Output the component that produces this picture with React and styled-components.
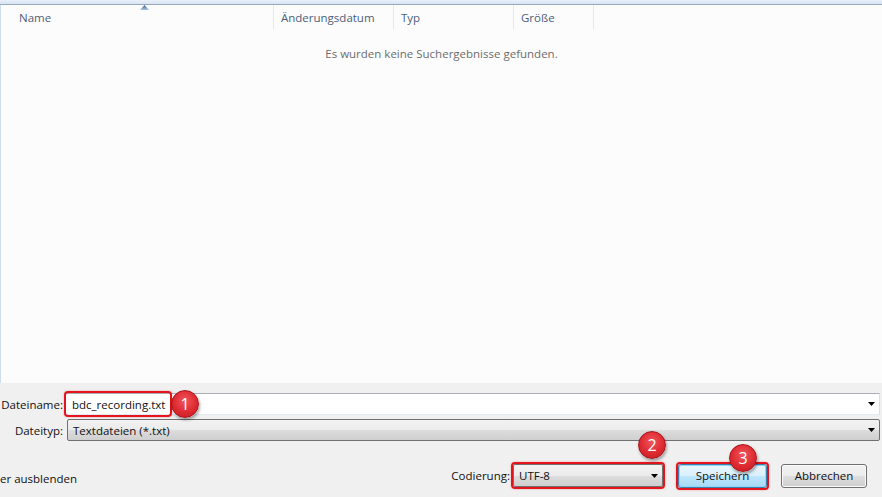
import React from 'react'
import styled, { createGlobalStyle } from 'styled-components'

const GlobalStyle = createGlobalStyle`
  html, body {
    margin: 0;
    padding: 0;
    background: #f0f0f0;
  }
  body {
    font-family: 'Open Sans', 'Noto Sans', sans-serif;
    font-size: 11.5px;
    color: #111;
  }
`

const Window = styled.div`
  width: 882px;
  height: 497px;
  display: flex;
  flex-direction: column;
  overflow: hidden;
  background: #f0f0f0;
`

const TopStrip = styled.div`
  height: 4px;
  flex: none;
  background: linear-gradient(#e9f0f8, #d8e4f2);
  border-bottom: 1px solid #98aac2;
`

const ListView = styled.div`
  height: 378px;
  flex: none;
  background: #fcfcfc;
  border-left: 1px solid #cddcee;
  display: flex;
  flex-direction: column;
`

const Header = styled.div`
  display: flex;
  height: 25px;
  flex: none;
`

const HeaderCell = styled.div`
  width: ${p => p.w}px;
  box-sizing: border-box;
  padding-left: ${p => p.pad}px;
  display: flex;
  align-items: center;
  border-right: 1px solid #e6eaef;
  color: #4c607a;
  position: relative;
`

const SortArrow = styled.svg`
  position: absolute;
  top: 0;
  left: 139px;
`

const EmptyMessage = styled.div`
  margin-top: 16px;
  text-align: center;
  color: #6d6d6d;
  line-height: 16px;
`

const Form = styled.div`
  padding-top: 10px;
  display: flex;
  flex-direction: column;
`

const FieldGrid = styled.div`
  display: grid;
  grid-template-columns: 64px 1fr;
  row-gap: 4px;
  padding-right: 2px;
`

const Label = styled.div`
  text-align: right;
  padding-right: 1px;
  align-self: center;
  white-space: nowrap;
`

const TextInput = styled.div`
  height: 22px;
  box-sizing: border-box;
  border: 1px solid;
  border-color: #abadb3 #dbdfe6 #e3e9ef #e2e3ea;
  background: #fff;
  display: flex;
  align-items: center;
  padding: 0 4px 0 0;
`

const Combo = styled.div`
  height: ${p => p.h || 22}px;
  width: ${p => (p.w ? p.w + 'px' : 'auto')};
  margin-left: ${p => p.indent || 0}px;
  box-sizing: border-box;
  border: 1px solid #707070;
  border-radius: 2px;
  background: linear-gradient(#f2f2f2 0%, #ebebeb 50%, #dddddd 51%, #cfcfcf 100%);
  display: flex;
  align-items: center;
  padding: 0 4px 0 5px;
  position: relative;
`

const FieldText = styled.span`
  flex: 1;
  white-space: nowrap;
`

const Highlight = styled.span`
  position: relative;
  display: inline-flex;
  align-items: center;
  &::after {
    content: '';
    position: absolute;
    inset: -2px;
    border: 2px solid #e3141c;
    border-radius: 4px;
    box-shadow: 0 0 2px rgba(230, 20, 28, 0.4);
    pointer-events: none;
  }
`

const NameHighlight = styled(Highlight)`
  height: 22px;
  padding: 0 5px 0 6px;
  margin-left: 1px;
`

const Badge = styled.div`
  position: absolute;
  left: ${p => p.x}px;
  top: ${p => p.y}px;
  width: 28px;
  height: 28px;
  border-radius: 50%;
  box-sizing: border-box;
  border: 1px solid #a5141a;
  background: radial-gradient(circle at 50% 38%, #f0575c 0%, #de2a31 55%, #c11b22 100%);
  box-shadow: 1px 2px 3px rgba(0, 0, 0, 0.35);
  color: #fff;
  font-size: 16px;
  display: flex;
  align-items: center;
  justify-content: center;
  z-index: 2;
`

const ActionRow = styled.div`
  margin-top: 22px;
  height: 25px;
  display: flex;
  align-items: center;
  padding-right: 15px;
`

const HideFolders = styled.div`
  flex: 1;
  margin-top: 6px;
`

const EncodingLabel = styled.div`
  margin-right: 3px;
`

const Button = styled.div`
  width: ${p => p.w}px;
  height: 24px;
  box-sizing: border-box;
  border-radius: 3px;
  display: flex;
  align-items: center;
  justify-content: center;
  border: 1px solid ${p => (p.primary ? '#3c7fb1' : '#707070')};
  background: ${p =>
    p.primary
      ? 'linear-gradient(#eaf6fd 0%, #d9f0fc 50%, #bee6fd 51%, #a7d9f5 100%)'
      : 'linear-gradient(#f2f2f2 0%, #ebebeb 50%, #dddddd 51%, #cfcfcf 100%)'};
  box-shadow: ${p => (p.primary ? 'inset 0 0 0 1px #8fd9f7, 0 0 2px #6fd3ff' : 'inset 0 0 0 1px #fbfbfb')};
`

const Gap = styled.div`
  width: ${p => p.w}px;
  flex: none;
`

function DropArrow () {
  return (
    <svg width='7' height='4' viewBox='0 0 7 4'>
      <path d='M0 0 H7 L3.5 4 Z' fill='#000' />
    </svg>
  )
}

export default function App () {
  return (
    <>
      <GlobalStyle />
      <Window>
        <TopStrip />
        <ListView>
          <Header>
            <HeaderCell w={273} pad={18}>
              Name
              <SortArrow width='9' height='5' viewBox='0 0 9 5'>
                <defs>
                  <linearGradient id='sa' x1='0' y1='0' x2='0' y2='1'>
                    <stop offset='0' stopColor='#3c5f86' />
                    <stop offset='1' stopColor='#a9cbe8' />
                  </linearGradient>
                </defs>
                <path d='M4.5 0 L9 5 H0 Z' fill='url(#sa)' />
              </SortArrow>
            </HeaderCell>
            <HeaderCell w={120} pad={7}>Änderungsdatum</HeaderCell>
            <HeaderCell w={120} pad={7}>Typ</HeaderCell>
            <HeaderCell w={80} pad={7}>Größe</HeaderCell>
          </Header>
          <EmptyMessage>Es wurden keine Suchergebnisse gefunden.</EmptyMessage>
        </ListView>
        <Form>
          <FieldGrid>
            <Label>Dateiname:</Label>
            <TextInput>
              <FieldText>
                <NameHighlight>
                  bdc_recording.txt
                  <Badge x={105} y={-3}>1</Badge>
                </NameHighlight>
              </FieldText>
              <DropArrow />
            </TextInput>
            <Label>Dateityp:</Label>
            <Combo indent={3}>
              <FieldText>Textdateien (*.txt)</FieldText>
              <DropArrow />
            </Combo>
          </FieldGrid>
          <ActionRow>
            <HideFolders>er ausblenden</HideFolders>
            <EncodingLabel>Codierung:</EncodingLabel>
            <Highlight>
              <Combo w={150} h={23}>
                <FieldText>UTF-8</FieldText>
                <DropArrow />
              </Combo>
              <Badge x={125} y={-33}>2</Badge>
            </Highlight>
            <Gap w={15} />
            <Highlight>
              <Button primary w={89}>Speichern</Button>
              <Badge x={51} y={-20}>3</Badge>
            </Highlight>
            <Gap w={14} />
            <Button w={86}>Abbrechen</Button>
          </ActionRow>
        </Form>
      </Window>
    </>
  )
}
